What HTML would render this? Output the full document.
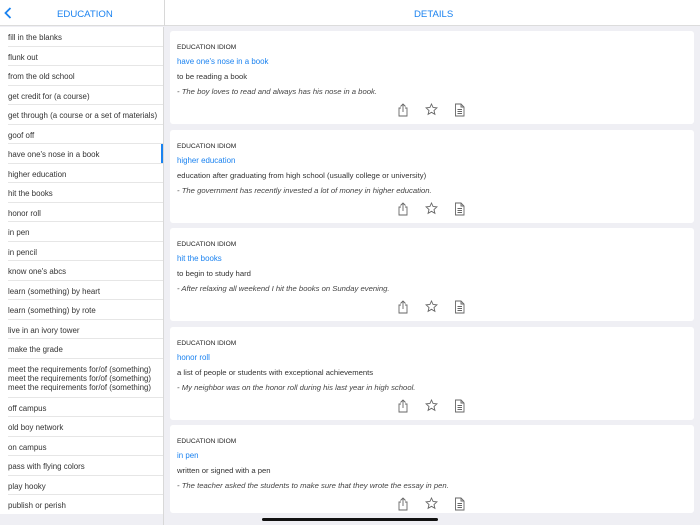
<!DOCTYPE html>
<html><head><style>
*{margin:0;padding:0;box-sizing:border-box}
body{width:700px;height:525px;overflow:hidden;background:#efeff4;font-family:"Liberation Sans",sans-serif;position:relative}
.hdr{position:absolute;left:0;top:0;width:700px;height:26px;background:#fff;border-bottom:1px solid #dcdcdc}
.hdr .t{position:absolute;top:8.5px;font-size:9.6px;color:#1a82f0}
.side{position:absolute;left:0;top:27px;width:164px;height:487px;background:#fff;border-right:1px solid #d8d8d8}
.row{position:relative;height:19.5px;padding-left:8px;font-size:7.9px;color:#333;line-height:21.5px}
.row:after{content:"";position:absolute;left:8px;right:0;bottom:0;border-bottom:1px solid #e6e6e6}
.row.sel:before{content:"";position:absolute;right:0;top:0;width:2px;height:19px;background:#1a82f0}
.row.m{height:39px;line-height:9.3px;padding-top:6px}
.sidebot{position:absolute;left:0;top:514px;width:164px;height:11px;background:#efeff4;border-right:1px solid #d8d8d8}
.card{position:absolute;left:170px;width:524px;height:93px;background:#fff;border-radius:3px;padding-left:7px}
.card .l{position:absolute;left:7px;top:13px;font-size:6.6px;color:#222}
.card .ti{position:absolute;left:7px;top:26px;font-size:7.9px;color:#1a82f0}
.card .d{position:absolute;left:7px;top:41px;font-size:7.7px;color:#333}
.card .e{position:absolute;left:7px;top:56px;font-size:7.7px;color:#444;font-style:italic}
.card svg{position:absolute;top:72px}
.home{position:absolute;left:262px;top:518px;width:176px;height:3px;border-radius:2px;background:#111}
</style></head><body>
<div class="hdr">
<svg style="position:absolute;left:4px;top:7px" width="8" height="12" viewBox="0 0 8 12"><path d="M6.5 1L1.5 6l5 5" fill="none" stroke="#1a82f0" stroke-width="1.8"/></svg>
<div class="t" style="left:57px">EDUCATION</div>
<div style="position:absolute;left:164px;top:0;width:1px;height:26px;background:#d8d8d8"></div>
<div class="t" style="left:414px">DETAILS</div>
</div>
<div class="side">
<div class="row">fill in the blanks</div>
<div class="row">flunk out</div>
<div class="row">from the old school</div>
<div class="row">get credit for (a course)</div>
<div class="row">get through (a course or a set of materials)</div>
<div class="row">goof off</div>
<div class="row sel">have one's nose in a book</div>
<div class="row">higher education</div>
<div class="row">hit the books</div>
<div class="row">honor roll</div>
<div class="row">in pen</div>
<div class="row">in pencil</div>
<div class="row">know one's abcs</div>
<div class="row">learn (something) by heart</div>
<div class="row">learn (something) by rote</div>
<div class="row">live in an ivory tower</div>
<div class="row">make the grade</div>
<div class="row m">meet the requirements for/of (something)<br>meet the requirements for/of (something)<br>meet the requirements for/of (something)</div>
<div class="row">off campus</div>
<div class="row">old boy network</div>
<div class="row">on campus</div>
<div class="row">pass with flying colors</div>
<div class="row">play hooky</div>
<div class="row">publish or perish</div>
</div>
<div class="sidebot"></div>

<div class="card" style="top:31px"><div class="l">EDUCATION IDIOM</div><div class="ti">have one's nose in a book</div><div class="d">to be reading a book</div><div class="e">- The boy loves to read and always has his nose in a book.</div>ICONS</div>
<div class="card" style="top:129.5px"><div class="l">EDUCATION IDIOM</div><div class="ti">higher education</div><div class="d">education after graduating from high school (usually college or university)</div><div class="e">- The government has recently invested a lot of money in higher education.</div>ICONS</div>
<div class="card" style="top:228px"><div class="l">EDUCATION IDIOM</div><div class="ti">hit the books</div><div class="d">to begin to study hard</div><div class="e">- After relaxing all weekend I hit the books on Sunday evening.</div>ICONS</div>
<div class="card" style="top:326.5px"><div class="l">EDUCATION IDIOM</div><div class="ti">honor roll</div><div class="d">a list of people or students with exceptional achievements</div><div class="e">- My neighbor was on the honor roll during his last year in high school.</div>ICONS</div>
<div class="card" style="top:425px;height:88px"><div class="l">EDUCATION IDIOM</div><div class="ti">in pen</div><div class="d">written or signed with a pen</div><div class="e">- The teacher asked the students to make sure that they wrote the essay in pen.</div>ICONS</div>
<div class="home"></div>
<script>
var ic='<svg style="left:227px" width="12" height="14" viewBox="0 0 12 14"><path d="M4 5H2v8h8V5H8M6 9V1M3.5 3.5L6 1l2.5 2.5" fill="none" stroke="#666" stroke-width="0.9"/></svg>'+
'<svg style="left:255px" width="13" height="13" viewBox="0 0 13 13"><path d="M6.5 1l1.6 3.5 3.8.4-2.9 2.6.9 3.8-3.4-2-3.4 2 .9-3.8L1.1 4.9l3.8-.4z" fill="none" stroke="#666" stroke-width="0.9"/></svg>'+
'<svg style="left:284px" width="11" height="14" viewBox="0 0 11 14"><path d="M1.5 1h5.5l3 3v9h-8.5zM7 1v3h3M3.5 6.5h4.5M3.5 8.5h4.5M3.5 10.5h4.5" fill="none" stroke="#666" stroke-width="0.9"/></svg>';
document.querySelectorAll('.card').forEach(function(c){c.innerHTML=c.innerHTML.replace('ICONS',ic);});
</script>
</body></html>
